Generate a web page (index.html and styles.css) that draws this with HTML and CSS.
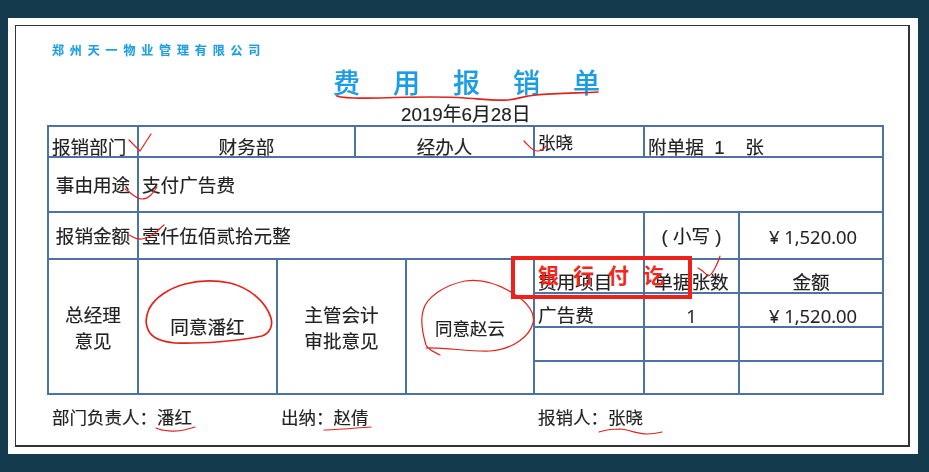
FILE: index.html
```html
<!DOCTYPE html>
<html lang="zh-CN">
<head>
<meta charset="utf-8">
<title>费用报销单</title>
<link rel="stylesheet" href="styles.css">
</head>
<body>
<main class="sheet">
  <div class="frame">
    <p class="company">郑州天一物业管理有限公司</p>
    <h1 class="title">费用报销单</h1>
    <p class="date">2019年6月28日</p>
    <table class="form">
      <colgroup>
        <col class="c1"><col class="c2"><col class="c3"><col class="c4"><col class="c5"><col class="c6"><col class="c7"><col class="c8">
      </colgroup>
      <tr class="r1">
        <td class="left tight">报销部门</td>
        <td colspan="2">财务部</td>
        <td colspan="2">经办人</td>
        <td class="left top">张晓</td>
        <td colspan="2" class="left wide">附单据&nbsp; 1 &nbsp;&nbsp; 张</td>
      </tr>
      <tr class="r2">
        <td class="mid">事由用途</td>
        <td colspan="7" class="left mid-left">支付广告费</td>
      </tr>
      <tr class="r3">
        <td class="mid">报销金额</td>
        <td colspan="5" class="left mid-left">壹仟伍佰贰拾元整</td>
        <td class="mid">( 小写 )</td>
        <td class="mid num amt">¥ 1,520.00</td>
      </tr>
      <tr class="r4">
        <td rowspan="4" class="mid lines">总经理<br>意见</td>
        <td rowspan="4" class="mid">同意潘红</td>
        <td rowspan="4" colspan="2" class="mid lines">主管会计<br>审批意见</td>
        <td rowspan="4" class="mid cloud">同意赵云</td>
        <td class="left">费用项目</td>
        <td>单据张数</td>
        <td>金额</td>
      </tr>
      <tr class="r5">
        <td class="left">广告费</td>
        <td class="num">1</td>
        <td class="num amt">¥ 1,520.00</td>
      </tr>
      <tr class="r6"><td></td><td></td><td></td></tr>
      <tr class="r7"><td></td><td></td><td></td></tr>
    </table>
    <div class="signs">
      <span class="sign s1">部门负责人：潘红</span>
      <span class="sign s2">出纳：赵倩</span>
      <span class="sign s3">报销人：张晓</span>
    </div>
  </div>
</main>
<div class="stamp"><span>银行付讫</span></div>
<svg class="marks" width="929" height="472" viewBox="0 0 929 472" fill="none">
  <path class="thick" d="M337 96C345 99 360 98 380 98C410 97 440 96 465 98C480 99 495 101 508 100C520 99 522 96 536 95C555 93 580 93 598 92"/>
  <path d="M129 140L140 151L151 134"/>
  <path d="M524 141C529 146 532 151 537 151C541 151 544 149 546 146"/>
  <path d="M125 189C131 192 135 199 142 199C149 199 153 193 157 187"/>
  <path d="M129 235C134 237 136 240 142 239C151 238 157 231 164 225"/>
  <path class="thick" d="M175 343C165 342 155 340 150 333C145 326 145 318 149 309C155 297 170 288 185 284C200 280 215 280 230 283C250 288 266 302 271 318C273 326 270 333 262 336C240 341 200 344 175 343"/>
  <path d="M440 355C432 351 428 349 426 345C423 335 420 322 423 311C426 297 445 285 465 281C485 278 505 287 520 298C530 306 535 315 533 323C530 335 515 349 490 351C470 352 445 347 426 348"/>
  <path d="M698 268C702 270 705 273 708 276C711 276 713 272 715 268C717 264 719 260 720 256"/>
  <path d="M156 428C162 431 176 432 184 430C188 429 192 428 195 427"/>
  <path d="M324 430C335 430 355 428 371 427"/>
  <path d="M599 432C605 430 612 429 620 429C630 430 638 434 647 434C652 434 658 433 662 432"/>
</svg>
</body>
</html>
```

FILE: styles.css
```css
* {
  box-sizing: border-box;
}

html,
body {
  margin: 0;
  padding: 0;
}

body {
  position: relative;
  width: 929px;
  height: 472px;
  overflow: hidden;
  background: #133a4d;
  font-family: "Liberation Sans", "Noto Sans CJK SC", sans-serif;
  color: #222;
}

.sheet {
  margin: 18px 0 0 8px;
  width: 910px;
  height: 436px;
  padding: 7px 8px 7px 7px;
  background: #fdfeff;
  filter: blur(0.35px);
}

.frame {
  width: 895px;
  height: 422px;
  padding: 0 0 0 31px;
  border: 1.5px solid #333;
  border-right-width: 2px;
  border-bottom-width: 2px;
  background: #fff;
  -webkit-text-stroke: 0.15px currentColor;
}

.company {
  margin: 18px 0 0 5px;
  height: 14px;
  line-height: 14px;
  font-size: 12px;
  font-weight: 700;
  letter-spacing: 5.85px;
  color: #1f9fe2;
  white-space: nowrap;
}

.title {
  margin: 8px 0 0 286px;
  height: 36px;
  line-height: 36px;
  font-size: 27px;
  font-weight: 500;
  letter-spacing: 33px;
  color: #1a9de4;
  white-space: nowrap;
}

.date {
  margin: 2px 0 0 354px;
  height: 21px;
  line-height: 21px;
  font-size: 18.8px;
  white-space: nowrap;
}

.form {
  margin-top: 0;
  width: 837px;
  table-layout: fixed;
  border-collapse: collapse;
  font-size: 18.6px;
  line-height: 16px;
  text-align: center;
}

.form td {
  padding: 0 0 1px;
  border: 2px solid #4e72a6;
  vertical-align: bottom;
  white-space: nowrap;
}

.c1 { width: 90px; }
.c2 { width: 139px; }
.c3 { width: 78px; }
.c4 { width: 51px; }
.c5 { width: 128px; }
.c6 { width: 110px; }
.c7 { width: 95px; }
.c8 { width: 144px; }

.r1 { height: 31px; }
.r2 { height: 55px; }
.r3 { height: 47px; }
.r4 { height: 34px; }
.r5 { height: 34px; }
.r6 { height: 34px; }
.r7 { height: 33px; }

.form .r1 td {
  padding-bottom: 0;
}

.form .r5 td {
  padding-bottom: 2px;
}

.form td.left {
  padding-left: 3px;
  text-align: left;
}

.form td.tight {
  padding-left: 3px;
}

.form .r1 td.top {
  vertical-align: top;
  padding-top: 8px;
  font-size: 17.5px;
}

.form td.mid,
.form td.mid-left {
  vertical-align: middle;
  padding: 2px 0 0;
}

.form td.mid-left {
  padding-left: 3px;
}

.form td.lines {
  padding-top: 4px;
  line-height: 26px;
}

.form td.cloud {
  padding-top: 5px;
  font-size: 17.5px;
}

.num {
  font-family: "Open Sans", "Noto Sans CJK SC", sans-serif;
  font-size: 18.4px;
}

.form td.amt {
  padding-left: 4px;
}

.signs {
  display: flex;
  margin-top: 12px;
  padding-left: 1px;
  height: 22px;
  line-height: 22px;
  font-size: 17.5px;
}

.sign {
  white-space: nowrap;
}

.s1 { margin-left: 4px; width: 229px; }
.s2 { width: 257px; }

.stamp {
  position: absolute;
  left: 511px;
  top: 256px;
  width: 181px;
  height: 43px;
  padding: 3px 0 0 23px;
  border: 4px solid #f0201a;
  color: #f3261c;
  font-size: 21px;
  font-weight: 700;
  line-height: 26px;
  letter-spacing: 14px;
  white-space: nowrap;
}

.marks {
  position: absolute;
  left: 0;
  top: 0;
}

.marks path {
  stroke: #e2231c;
  stroke-width: 1.2;
  stroke-linecap: round;
  stroke-linejoin: round;
}

.marks path.thick {
  stroke-width: 1.7;
}
```
